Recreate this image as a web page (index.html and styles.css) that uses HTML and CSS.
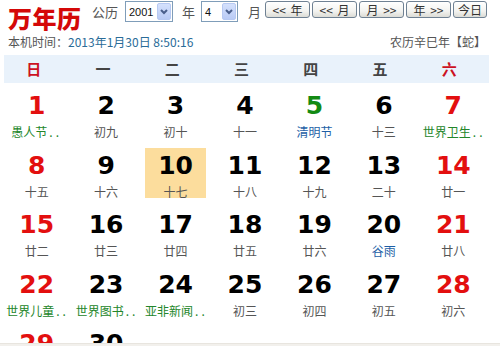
FILE: index.html
```html
<!DOCTYPE html>
<html lang="zh">
<head>
<meta charset="utf-8">
<title>万年历</title>
<link rel="stylesheet" href="styles.css">
</head>
<body>
<div class="page">
  <div class="toolbar">
    <div class="logo">万年历</div>
    <span class="lbl lbl-gl">公历</span>
    <div class="select sel-year"><span class="val">2001</span><span class="arrow"><svg width="12" height="15" viewBox="0 0 12 15"><path d="M3 6 L6 9 L9 6" fill="none" stroke="#4a5f8c" stroke-width="2"/></svg></span></div>
    <span class="lbl lbl-y">年</span>
    <div class="select sel-month"><span class="val">4</span><span class="arrow"><svg width="12" height="15" viewBox="0 0 12 15"><path d="M3 6 L6 9 L9 6" fill="none" stroke="#4a5f8c" stroke-width="2"/></svg></span></div>
    <span class="lbl lbl-m">月</span>
    <div class="btns">
      <button class="btn">&lt;&lt; 年</button>
      <button class="btn">&lt;&lt; 月</button>
      <button class="btn">月 &gt;&gt;</button>
      <button class="btn">年 &gt;&gt;</button>
      <button class="btn btn-today">今日</button>
    </div>
  </div>
  <div class="info">
    <span class="now">本机时间：<span class="time">2013年1月30日 8:50:16</span></span>
    <span class="lunar-year">农历辛巳年【蛇】</span>
  </div>
  <div class="weekhead">
    <div class="wd red">日</div>
    <div class="wd">一</div>
    <div class="wd">二</div>
    <div class="wd">三</div>
    <div class="wd">四</div>
    <div class="wd">五</div>
    <div class="wd red">六</div>
  </div>
  <div class="viewport">
    <div class="grid">
      <div class="cell"><div class="num red">1</div><div class="sub green">愚人节<span class="dots">..</span></div></div>
      <div class="cell"><div class="num">2</div><div class="sub">初九</div></div>
      <div class="cell"><div class="num">3</div><div class="sub">初十</div></div>
      <div class="cell"><div class="num">4</div><div class="sub">十一</div></div>
      <div class="cell"><div class="num green">5</div><div class="sub blue">清明节</div></div>
      <div class="cell"><div class="num">6</div><div class="sub">十三</div></div>
      <div class="cell"><div class="num red">7</div><div class="sub green">世界卫生<span class="dots">..</span></div></div>

      <div class="cell"><div class="num red">8</div><div class="sub">十五</div></div>
      <div class="cell"><div class="num">9</div><div class="sub">十六</div></div>
      <div class="cell today"><div class="num">10</div><div class="sub">十七</div></div>
      <div class="cell"><div class="num">11</div><div class="sub">十八</div></div>
      <div class="cell"><div class="num">12</div><div class="sub">十九</div></div>
      <div class="cell"><div class="num">13</div><div class="sub">二十</div></div>
      <div class="cell"><div class="num red">14</div><div class="sub">廿一</div></div>

      <div class="cell"><div class="num red">15</div><div class="sub">廿二</div></div>
      <div class="cell"><div class="num">16</div><div class="sub">廿三</div></div>
      <div class="cell"><div class="num">17</div><div class="sub">廿四</div></div>
      <div class="cell"><div class="num">18</div><div class="sub">廿五</div></div>
      <div class="cell"><div class="num">19</div><div class="sub">廿六</div></div>
      <div class="cell"><div class="num">20</div><div class="sub blue">谷雨</div></div>
      <div class="cell"><div class="num red">21</div><div class="sub">廿八</div></div>

      <div class="cell"><div class="num red">22</div><div class="sub green">世界儿童<span class="dots">..</span></div></div>
      <div class="cell"><div class="num">23</div><div class="sub green">世界图书<span class="dots">..</span></div></div>
      <div class="cell"><div class="num">24</div><div class="sub green">亚非新闻<span class="dots">..</span></div></div>
      <div class="cell"><div class="num">25</div><div class="sub">初三</div></div>
      <div class="cell"><div class="num">26</div><div class="sub">初四</div></div>
      <div class="cell"><div class="num">27</div><div class="sub">初五</div></div>
      <div class="cell"><div class="num red">28</div><div class="sub">初六</div></div>

      <div class="cell"><div class="num red">29</div></div>
      <div class="cell"><div class="num">30</div></div>
    </div>
  </div>
  <div class="strip"></div>
</div>
</body>
</html>
```

FILE: styles.css
```css
html, body {
  margin: 0;
  padding: 0;
  background: #fff;
}
body {
  width: 500px;
  height: 346px;
  overflow: hidden;
  font-family: "Noto Sans CJK SC", "Liberation Sans", sans-serif;
  color: #555;
}
.page {
  width: 500px;
  height: 346px;
  display: flex;
  flex-direction: column;
}

/* top toolbar */
.toolbar {
  height: 31px;
  flex: none;
  display: flex;
  align-items: flex-start;
  padding-top: 1px;
  box-sizing: border-box;
}
.logo {
  margin-left: 8px;
  margin-top: 5px;
  width: 76px;
  font-size: 24px;
  line-height: 24px;
  font-weight: 900;
  color: #d40808;
  letter-spacing: 0.5px;
  white-space: nowrap;
}
.lbl {
  font-size: 13px;
  line-height: 21px;
  color: #555;
  white-space: nowrap;
}
.lbl-gl { margin-left: 8px; width: 26px; }
.lbl-y { margin-left: 9px; width: 13px; }
.lbl-m { margin-left: 10px; width: 13px; }
.select {
  height: 21px;
  box-sizing: border-box;
  border: 1px solid #7f9db9;
  background: #fff;
  display: flex;
  align-items: center;
  justify-content: space-between;
  padding: 0 1px 0 3px;
}
.sel-year { margin-left: 7px; width: 48px; }
.sel-month { margin-left: 6px; width: 37px; }
.val {
  font-family: "Liberation Sans", sans-serif;
  font-size: 11px;
  color: #111;
}
.arrow {
  width: 14px;
  height: 17px;
  box-sizing: border-box;
  border: 1px solid #b7c9f2;
  border-radius: 2px;
  background: linear-gradient(#d5e1fd, #b9cbf5);
  display: flex;
  align-items: center;
  justify-content: center;
}
.arrow svg { display: block; }

.btns {
  margin-left: 4px;
  display: flex;
  gap: 2px;
}
.btn {
  width: 45px;
  height: 17px;
  margin: 0;
  padding: 0;
  box-sizing: border-box;
  border: 1px solid #6f8193;
  border-radius: 3px;
  background: linear-gradient(#ffffff, #f3f3f0 60%, #dcdcd6);
  font-family: "Noto Sans CJK SC", "Liberation Sans", sans-serif;
  font-size: 12px;
  line-height: 14px;
  color: #333;
  word-spacing: 2px;
  white-space: nowrap;
}
.btn-today { width: 34px; }

/* info line */
.info {
  flex: none;
  margin-top: 3px;
  height: 15px;
  display: flex;
  justify-content: space-between;
  padding: 0 14px 0 8px;
  font-size: 12px;
  line-height: 15px;
  color: #555;
}
.time { color: #2a6c98; }

/* weekday header */
.weekhead {
  flex: none;
  margin: 6px 11px 0 4px;
  height: 28px;
  background: #e9f2fb;
  display: grid;
  grid-template-columns: repeat(7, 1fr);
  align-items: center;
}
.wd {
  text-align: center;
  padding-right: 10px;
  font-size: 15px;
  font-weight: 700;
  color: #444;
  line-height: 28px;
}
.wd.red { color: #cc1122; }

/* day grid */
.viewport {
  flex: none;
  height: 260px;
  overflow: hidden;
}
.grid {
  margin-left: 2px;
  width: 486px;
  padding-top: 5px;
  display: grid;
  grid-template-columns: repeat(7, 1fr);
  row-gap: 9.5px;
}
.cell {
  justify-self: center;
  width: 61px;
  height: 50px;
  box-sizing: border-box;
  padding-top: 4px;
  text-align: center;
}
.cell.today { background: #fcdd9d; }
.num {
  font-family: "DejaVu Sans", sans-serif;
  font-weight: 700;
  font-size: 25px;
  line-height: 28px;
  color: #000;
}
.num.red { color: #e30f0f; }
.num.green { color: #138a13; }
.sub {
  margin-top: 6px;
  font-size: 12px;
  line-height: 12px;
  color: #555;
  white-space: nowrap;
}
.sub.green { color: #23862a; }
.sub.blue { color: #1d5fa6; }
.dots { letter-spacing: 3px; margin-left: 2px; }

.strip {
  flex: none;
  height: 3px;
  background: #f2f0ec;
  border-top: 1px solid #e8e5df;
}
```
